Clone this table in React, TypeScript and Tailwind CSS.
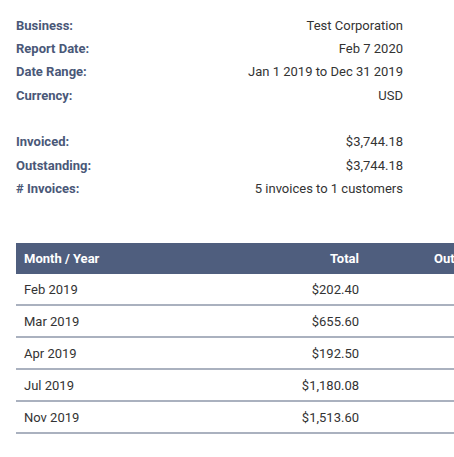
import React from "react";

const info: [string, string][] = [
  ["Business:", "Test Corporation"],
  ["Report Date:", "Feb 7 2020"],
  ["Date Range:", "Jan 1 2019 to Dec 31 2019"],
  ["Currency:", "USD"],
];
const info2: [string, string][] = [
  ["Invoiced:", "$3,744.18"],
  ["Outstanding:", "$3,744.18"],
  ["# Invoices:", "5 invoices to 1 customers"],
];
const rows: [string, string][] = [
  ["Feb 2019", "$202.40"],
  ["Mar 2019", "$655.60"],
  ["Apr 2019", "$192.50"],
  ["Jul 2019", "$1,180.08"],
  ["Nov 2019", "$1,513.60"],
];

function InfoRow({ l, v }: { l: string; v: string }) {
  return (
    <div className="flex h-[23.3px] items-center justify-between">
      <span className="font-bold text-[#4a5878]">{l}</span>
      <span className="text-[#333333]">{v}</span>
    </div>
  );
}

export default function App() {
  return (
    <div
      className="w-[454px] h-[457px] overflow-hidden bg-white text-[13px]"
      style={{ fontFamily: "Roboto, 'Liberation Sans', sans-serif" }}
    >
      <div className="pt-[14px] pl-4 w-[403px]">
        {info.map(([l, v]) => (
          <InfoRow key={l} l={l} v={v} />
        ))}
        <div className="h-[23.3px]" />
        {info2.map(([l, v]) => (
          <InfoRow key={l} l={l} v={v} />
        ))}
      </div>
      <div className="mt-[43px] ml-4 w-[600px]">
        <div className="flex h-[31px] items-center bg-[#4f5e7e] font-bold text-white">
          <div className="w-[200px] pl-2">Month / Year</div>
          <div className="w-[151px] pr-2 text-right">Total</div>
          <div className="w-[67px]" />
          <div>Outstanding</div>
        </div>
        {rows.map(([m, t]) => (
          <div
            key={m}
            className="flex h-[32px] items-center border-b-2 border-[#aab1bf] text-[#333333]"
          >
            <div className="w-[200px] pl-2">{m}</div>
            <div className="w-[151px] pr-2 text-right">{t}</div>
          </div>
        ))}
      </div>
    </div>
  );
}
